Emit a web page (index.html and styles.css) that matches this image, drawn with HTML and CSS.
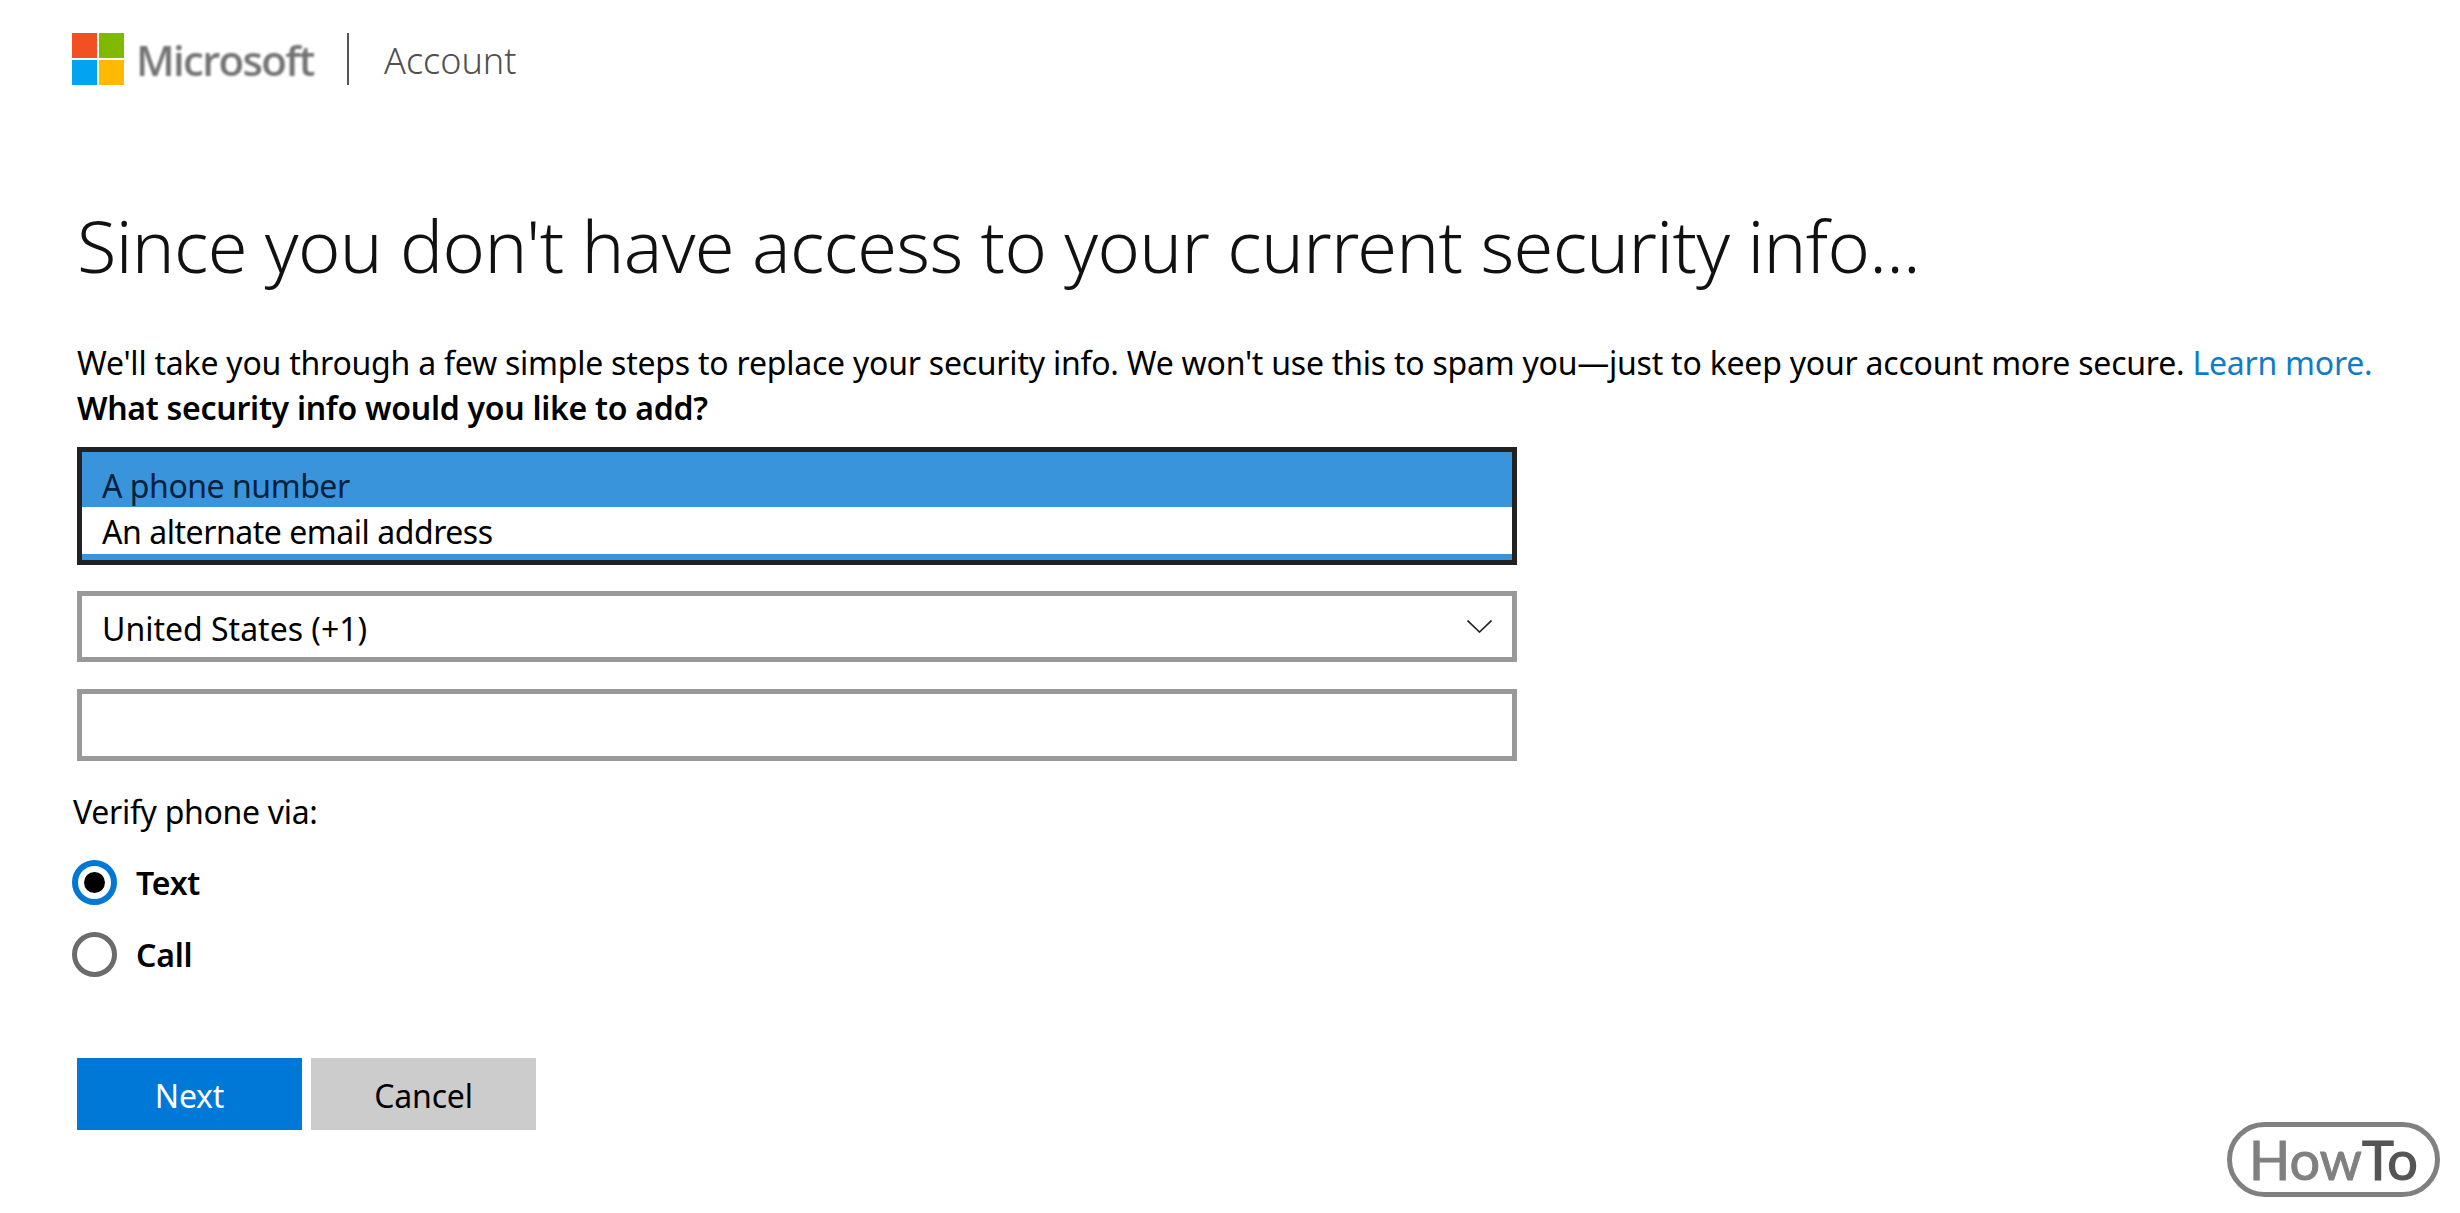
FILE: index.html
```html
<!DOCTYPE html>
<html lang="en">
<head>
<meta charset="utf-8">
<title>Microsoft account</title>
<link rel="stylesheet" href="styles.css">
</head>
<body>
<header class="brand">
  <div class="logo-grid"><i class="sq red"></i><i class="sq green"></i><i class="sq blue"></i><i class="sq yellow"></i></div>
  <span class="wordmark">Microsoft</span>
  <span class="divider"></span>
  <span class="product">Account</span>
</header>
<main class="content">
  <h1 class="title">Since you don't have access to your current security info...</h1>
  <p class="intro">We'll take you through a few simple steps to replace your security info. We won't use this to spam you—just to keep your account more secure. <a class="link" href="#">Learn more.</a></p>
  <p class="question">What security info would you like to add?</p>
  <div class="listbox">
    <div class="option selected">A phone number</div>
    <div class="option alt">An alternate email address</div>
  </div>
  <div class="field select-field"><span class="field-text">United States (+1)</span>
    <svg class="chevron" viewBox="0 0 25 13" width="25" height="13"><path d="M0.5 0.5 L12.5 12 L24.5 0.5" fill="none" stroke="#222" stroke-width="1.6"/></svg>
  </div>
  <div class="field input-field"></div>
  <p class="verify">Verify phone via:</p>
  <div class="radio-row"><span class="radio checked"></span><span class="radio-label">Text</span></div>
  <div class="radio-row second"><span class="radio"></span><span class="radio-label">Call</span></div>
  <div class="actions">
    <button class="btn primary">Next</button>
    <button class="btn secondary">Cancel</button>
  </div>
</main>
<div class="howto"><span>How</span><b>To</b></div>
</body>
</html>
```
FILE: styles.css
```css
* { box-sizing: border-box; }
html, body { margin: 0; height: 100%; }
body { background: #fff; color: #000; font-family: "Noto Sans", "Open Sans", sans-serif; overflow: hidden; position: relative; }
.brand { display: flex; align-items: center; height: 52px; margin: 33px 0 0 72px; }
.logo-grid { display: grid; grid-template-columns: 25px 25px; grid-template-rows: 25px 25px; gap: 2px; }
.sq { display: block; }
.red { background: #f25022; }
.green { background: #7fba00; }
.blue { background: #00a4ef; }
.yellow { background: #ffb900; }
.wordmark { margin-left: 12px; font-family: "Open Sans", sans-serif; font-weight: 600; font-size: 42px; letter-spacing: -1.7px; color: #737373; filter: blur(0.8px); width: 178px; }
.divider { width: 2px; height: 52px; background: #555; margin-left: 33px; }
.product { margin-left: 35px; font-size: 36px; line-height: 56px; font-weight: 300; color: #505050; padding-top: 4px; }
.content { padding-left: 77px; }
.title { margin: 110px 0 0; font-size: 72px; font-weight: 300; line-height: 100px; letter-spacing: -0.65px; color: #111; white-space: nowrap; }
.intro { margin: 45px 0 0; font-size: 32px; line-height: 45px; letter-spacing: -0.23px; white-space: nowrap; }
.link { color: #0f7ccb; text-decoration: none; }
.question { margin: 0; font-size: 32px; line-height: 45px; font-weight: 600; letter-spacing: -0.27px; }
.listbox { width: 1440px; height: 118px; margin-top: 17px; border: 5px solid #222; background: linear-gradient(#fff, #fff) 0 55px / 100% 47px no-repeat, #3a94dc; display: flex; flex-direction: column; }
.option { padding-left: 20px; font-size: 32px; line-height: 45px; letter-spacing: -0.46px; }
.option.alt { padding-top: 2px; }
.option.selected { height: 55px; padding-top: 11px; color: #04213d; }
.field { width: 1440px; border: 5px solid #999; background: #fff; display: flex; align-items: center; justify-content: space-between; font-size: 32px; padding: 0 20px; }
.field-text { padding-top: 3px; }
.select-field { height: 71px; margin-top: 26px; }
.input-field { height: 72px; margin-top: 27px; }
.verify { margin: 28px 0 0 -4px; font-size: 32px; line-height: 45px; letter-spacing: -0.3px; }
.radio-row { display: flex; align-items: center; gap: 19px; margin: 26px 0 0 -5px; height: 45px; }
.radio-row.second { margin-top: 27px; }
.radio { width: 45px; height: 45px; border-radius: 50%; border: 5px solid #6b6b6b; background: #fff; display: flex; align-items: center; justify-content: center; }
.radio.checked { border: 6px solid #0078d4; }
.radio.checked::after { content: ""; width: 21px; height: 21px; border-radius: 50%; background: #000; }
.radio-label { font-size: 32px; font-weight: 600; letter-spacing: -0.2px; }
.actions { display: flex; gap: 9px; margin-top: 81px; }
.btn { width: 225px; height: 72px; border: 0; padding: 2px 0 0; font-family: inherit; font-size: 32px; letter-spacing: -0.2px; }
.primary { background: #0078d7; color: #fff; }
.secondary { background: #ccc; color: #000; }
.howto { position: absolute; left: 2227px; top: 1122px; width: 213px; height: 75px; border: 5px solid #808080; border-radius: 38px; display: flex; align-items: center; justify-content: center; font-family: Lato, sans-serif; font-size: 54px; color: #808080; filter: blur(0.6px); -webkit-text-stroke: 1px #808080; }
.howto b { font-weight: 400; color: #555; -webkit-text-stroke: 1.2px #555; }
```
